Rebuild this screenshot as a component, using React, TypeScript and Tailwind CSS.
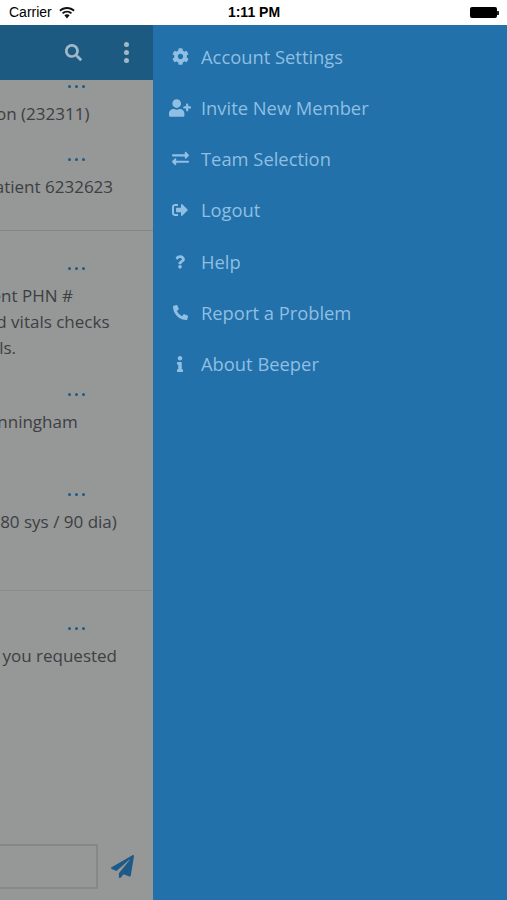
import { FaCog, FaUserPlus, FaExchangeAlt, FaSignOutAlt, FaQuestion, FaPhoneAlt, FaInfo, FaPaperPlane, FaSearch } from "react-icons/fa";

const menuItems = [
  { label: "Account Settings", icon: <FaCog className="w-[17px] h-[17px]" /> },
  { label: "Invite New Member", icon: <FaUserPlus className="w-[22px] h-[18px]" /> },
  { label: "Team Selection", icon: <FaExchangeAlt className="w-[19px] h-[17px]" /> },
  { label: "Logout", icon: <FaSignOutAlt className="w-[16px] h-[16px]" /> },
  { label: "Help", icon: <FaQuestion className="w-[10px] h-[14px]" /> },
  { label: "Report a Problem", icon: <FaPhoneAlt className="w-[15px] h-[15px]" /> },
  { label: "About Beeper", icon: <FaInfo className="w-[8px] h-[16px]" /> },
];

function Message({ lines, shift, top }: { lines: string[]; shift: string; top: string }) {
  return (
    <div className={top}>
      <div className="flex justify-center gap-[4px] h-[12px] items-center mb-[9px]">
        <span className="w-[3px] h-[3px] rounded-full bg-[#1d5a88]" />
        <span className="w-[3px] h-[3px] rounded-full bg-[#1d5a88]" />
        <span className="w-[3px] h-[3px] rounded-full bg-[#1d5a88]" />
      </div>
      <div className={`${shift} whitespace-nowrap text-[17px] leading-[26px] text-[#3c4043]`}>
        {lines.map((line) => (
          <div key={line}>{line}</div>
        ))}
      </div>
    </div>
  );
}

export default function App() {
  return (
    <div className="h-[900px] w-[507px] overflow-hidden flex flex-col bg-[#2271aa] font-['Open_Sans',sans-serif]">
      <div className="h-[25px] bg-white flex items-center justify-between pl-[9px] pr-[8px] text-[14px] text-black font-['Liberation_Sans',sans-serif]">
        <div className="flex items-center gap-[7px] w-[170px]">
          <span>Carrier</span>
          <svg width="16" height="12" viewBox="0 0 16 12" fill="#111">
            <path d="M8 0C5 0 2.300 1.100 0.300 3.100L1.600 4.500C3.300 2.900 5.500 1.900 8 1.900S12.700 2.900 14.400 4.500L15.700 3.100C13.700 1.100 11 0 8 0Z" />
            <path d="M8 3.700C6 3.700 4.200 4.500 2.900 5.800L4.200 7.100C5.200 6.200 6.500 5.600 8 5.600S10.800 6.200 11.800 7.100L13.100 5.800C11.800 4.500 10 3.700 8 3.700Z" />
            <path d="M8 7.300C7 7.300 6.100 7.700 5.400 8.300L8 11.500L10.600 8.300C9.900 7.700 9 7.300 8 7.300Z" />
          </svg>
        </div>
        <span className="font-semibold">1:11 PM</span>
        <div className="w-[170px] flex justify-end items-center">
          <div className="w-[27px] h-[11px] rounded-[2px] bg-black" />
          <div className="w-[2px] h-[4px] bg-[#222]" />
        </div>
      </div>
      <div className="flex-1 flex min-h-0">
        <div className="w-[153px] flex flex-col overflow-hidden bg-[#969797]">
          <div className="h-[55px] shrink-0 bg-[#1c5a82] flex items-center justify-end pr-[24px] gap-[42px] text-[#a3b8c7]">
            <FaSearch className="w-[17px] h-[17px]" />
            <div className="flex flex-col gap-[3px]">
              <span className="w-[5px] h-[5px] rounded-full bg-[#a3b8c7]" />
              <span className="w-[5px] h-[5px] rounded-full bg-[#a3b8c7]" />
              <span className="w-[5px] h-[5px] rounded-full bg-[#a3b8c7]" />
            </div>
          </div>
          <div className="flex-1 min-h-0">
            <Message top="" shift="ml-[-84px]" lines={["Consultation (232311)"]} />
            <Message top="pt-[26px]" shift="ml-[-46px]" lines={["For patient 6232623"]} />
            <div className="h-px mt-[30px] bg-[#838484]" />
            <Message top="pt-[31px]" shift="ml-[-69px]" lines={["For patient PHN #", "Recorded vitals checks", "iron levels."]} />
            <Message top="pt-[27px]" shift="ml-[-52px]" lines={["Dr. Cunningham"]} />
            <Message top="pt-[53px]" shift="ml-[-79px]" lines={["BP high (180 sys / 90 dia)"]} />
            <div className="h-px mt-[55px] bg-[#8b8c8c]" />
            <Message top="pt-[31px]" shift="ml-[-59px]" lines={["Results you requested"]} />
          </div>
          <div className="h-[56px] shrink-0 flex items-start">
            <div className="w-[98px] h-[45px] border-t-2 border-r-2 border-b-2 border-[#868787]" />
            <FaPaperPlane className="w-[23px] h-[23px] mt-[11px] ml-[13px] text-[#1d5a88]" />
          </div>
        </div>
        <div className="flex-1 pt-[5.6px] text-[#8fbfe2]">
          {menuItems.map((item) => (
            <div key={item.label} className="h-[51.33px] flex items-center">
              <div className="w-[54px] flex justify-center">{item.icon}</div>
              <span className="ml-[-6px] text-[18.35px]">{item.label}</span>
            </div>
          ))}
        </div>
      </div>
    </div>
  );
}
